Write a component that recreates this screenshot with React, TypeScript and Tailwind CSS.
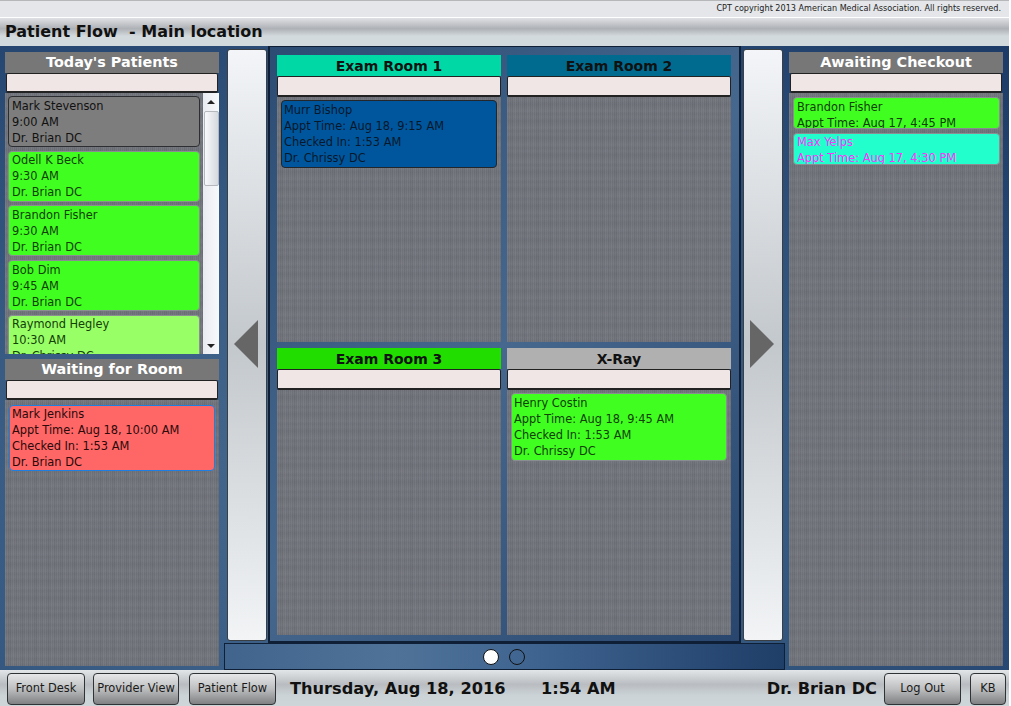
import React from 'react';

const linen =
  'bg-[#6f727a] bg-[repeating-linear-gradient(90deg,rgba(255,255,255,0.025)_0px,rgba(255,255,255,0)_3px,rgba(0,0,0,0.025)_5px,rgba(255,255,255,0.03)_8px,rgba(0,0,0,0.015)_11px,rgba(255,255,255,0.025)_13px),repeating-linear-gradient(0deg,rgba(0,0,0,0.025)_0px,rgba(255,255,255,0.025)_4px,rgba(0,0,0,0.01)_7px,rgba(255,255,255,0.03)_10px,rgba(0,0,0,0.025)_17px),repeating-linear-gradient(90deg,rgba(255,255,255,0.03)_0px,rgba(255,255,255,0.03)_1px,rgba(0,0,0,0.03)_1px,rgba(0,0,0,0.03)_2px)]';

const SearchBox = ({ className = 'h-[20px] mx-px' }: { className?: string }) => (
  <div className={`rounded-[2px] border border-[#222] border-b-2 bg-[#f1e6e6] ${className}`} />
);

const ColumnHeader = ({ title }: { title: string }) => (
  <div className="h-[21px] bg-[#777777] text-center text-[14.4px] leading-[21px] font-bold text-white">
    {title}
  </div>
);

const RoomHeader = ({ title, color }: { title: string; color: string }) => (
  <div className={`h-[21px] text-center text-[14px] leading-[22px] font-bold text-[#111] ${color}`}>
    {title}
  </div>
);

interface CardProps {
  lines: string[];
  className: string;
}

const Card = ({ lines, className }: CardProps) => (
  <div className={`shrink-0 overflow-hidden rounded-[4px] border text-[11.4px] leading-[16px] whitespace-nowrap ${className}`}>
    {lines.map((line) => (
      <div key={line}>{line}</div>
    ))}
  </div>
);

const ArrowButton = ({ dir }: { dir: 'left' | 'right' }) => (
  <div className="w-[40px] h-[592px] mt-[3px] flex items-center justify-center rounded-[3px] border border-[#3a3f44] bg-gradient-to-b from-[#f3f5f8] via-[#c3c8cc] to-[#f2f4f6]">
    <svg width="26" height="48" viewBox="0 0 26 48" className="mt-[-2px]">
      <polygon points={dir === 'left' ? '24,0 24,48 0,24' : '0,0 0,48 24,24'} fill="#666666" />
    </svg>
  </div>
);

const Room = ({ title, color, children }: { title: string; color: string; children?: React.ReactNode }) => (
  <div className="flex flex-col h-[287px] w-[224px]">
    <RoomHeader title={title} color={color} />
    <SearchBox className="h-[21px]" />
    <div className={`flex-1 flex flex-col px-[4px] pt-[3px] ${linen}`}>{children}</div>
  </div>
);

const listCard = 'px-[3px] py-[0.5px] border-[#8a8d92]';
const greenCard = `bg-[#40ff20] text-[#14400a] ${listCard}`;

const BarButton = ({ label, width }: { label: string; width: string }) => (
  <div className={`h-[32px] flex items-center justify-center rounded-[4px] border border-[#2f3336] bg-gradient-to-b from-[#e6e7e8] via-[#bdbebf] to-[#7f8183] text-[11.4px] text-[#1a1a1a] ${width}`}>
    {label}
  </div>
);

export default function App() {
  return (
    <div className="w-[1009px] h-[706px] flex flex-col overflow-hidden font-['DejaVu_Sans',sans-serif]">
      {/* top strips */}
      <div className="h-[18px] shrink-0 border-t border-b border-t-[#b5b7b9] border-b-white bg-[#e4e6e9] text-right pr-[8px] text-[8.1px] leading-[15px] text-[#222]">
        CPT copyright 2013 American Medical Association. All rights reserved.
      </div>
      <div className="h-[28px] shrink-0 pl-[5px] bg-[linear-gradient(180deg,#dfe1e4_0%,#aeb1b6_38%,#d3dade_65%,#d3dade_100%)] text-[16px] leading-[27px] font-bold text-[#111] whitespace-pre">
        Patient Flow  - Main location
      </div>

      {/* main area */}
      <div className="h-[624px] shrink-0 flex pl-[5px] bg-[radial-gradient(ellipse_at_35%_70%,#46698f_0%,#365a82_45%,#1c3b66_100%)]">
        {/* left column */}
        <div className="w-[214px] mr-[5px] flex flex-col pt-[6px] pb-[4px]">
          <ColumnHeader title="Today's Patients" />
          <SearchBox />
          <div className={`h-[261px] shrink-0 flex ${linen}`}>
            <div className="flex-1 min-w-0 h-full overflow-hidden flex flex-col gap-[3.7px] pt-[3px] pl-[3px] pr-[3px]">
              <Card lines={['Mark Stevenson', '9:00 AM', 'Dr. Brian DC']} className="bg-[#7d7d7d] border-[#2c2e32] text-[#111] px-[3px] py-[0.5px]" />
              <Card lines={['Odell K Beck', '9:30 AM', 'Dr. Brian DC']} className={greenCard} />
              <Card lines={['Brandon Fisher', '9:30 AM', 'Dr. Brian DC']} className={greenCard} />
              <Card lines={['Bob Dim', '9:45 AM', 'Dr. Brian DC']} className={greenCard} />
              <Card lines={['Raymond Hegley', '10:30 AM', 'Dr. Chrissy DC']} className={`bg-[#99ff66] text-[#14400a] ${listCard}`} />
            </div>
            <div className="w-[16px] shrink-0 flex flex-col items-center bg-gradient-to-r from-[#e8ebf1] to-[#f8f9fb]">
              <div className="h-[18px] flex items-center">
                <div className="w-0 h-0 border-x-[4px] border-x-transparent border-b-[4px] border-b-[#222]" />
              </div>
              <div className="w-[15px] h-[75px] rounded-[2px] border border-[#b4b8bd] bg-gradient-to-r from-[#f8f9fb] to-[#d5d9de]" />
              <div className="flex-1" />
              <div className="h-[16px] flex items-center">
                <div className="w-0 h-0 border-x-[4px] border-x-transparent border-t-[4px] border-t-[#222]" />
              </div>
            </div>
          </div>
          <div className="mt-[5px]">
            <ColumnHeader title="Waiting for Room" />
          </div>
          <SearchBox />
          <div className={`flex-1 flex flex-col px-[4px] pt-[5px] ${linen}`}>
            <Card
              lines={['Mark Jenkins', 'Appt Time: Aug 18, 10:00 AM', 'Checked In: 1:53 AM', 'Dr. Brian DC']}
              className="bg-[#ff6666] border-[#1f7fe0] text-[#2a0a0a] px-[2px]"
            />
          </div>
        </div>

        {/* center block */}
        <div className="w-[561px] flex flex-col">
          <div className="h-[597px] flex">
            <div className="ml-[3px]">
              <ArrowButton dir="left" />
            </div>
            <div className="w-[473px] h-[597px] ml-px border-x-2 border-t border-b-2 border-[#0f1f35] bg-[linear-gradient(135deg,#2c4c74_0%,#46678e_50%,#28466e_100%)] px-[7px] pt-[8px]">
              <div className="grid grid-cols-[224px_224px] gap-x-[6px] gap-y-[6px]">
                <Room title="Exam Room 1" color="bg-[#00d9a6]">
                  <Card
                    lines={['Murr Bishop', 'Appt Time: Aug 18, 9:15 AM', 'Checked In: 1:53 AM', 'Dr. Chrissy DC']}
                    className="bg-[#00569c] border-[#23262b] text-[#07182c] px-[2px] py-px"
                  />
                </Room>
                <Room title="Exam Room 2" color="bg-[#006b8f]" />
                <Room title="Exam Room 3" color="bg-[#22dd00]" />
                <Room title="X-Ray" color="bg-[#b0b0b0]">
                  <Card
                    lines={['Henry Costin', 'Appt Time: Aug 18, 9:45 AM', 'Checked In: 1:53 AM', 'Dr. Chrissy DC']}
                    className="bg-[#40ff20] text-[#14400a] border-[#8a8d92] px-[2px] py-px"
                  />
                </Room>
              </div>
            </div>
            <div className="ml-[2px]">
              <ArrowButton dir="right" />
            </div>
          </div>
          <div className="h-[27px] flex items-center justify-center gap-[10px] border border-[#0f1f35] bg-[linear-gradient(90deg,#40648c_0%,#4f7398_30%,#3f6490_55%,#1f3e68_100%)]">
            <div className="ml-[-2px] w-[16px] h-[16px] rounded-full border border-[#111] bg-white" />
            <div className="w-[16px] h-[16px] rounded-full border border-[#111]" />
          </div>
        </div>

        {/* right column */}
        <div className="w-[214px] ml-[4px] flex flex-col pt-[6px] pb-[4px]">
          <ColumnHeader title="Awaiting Checkout" />
          <SearchBox />
          <div className={`flex-1 flex flex-col gap-[4px] pl-[4px] pr-[3px] pt-[4px] ${linen}`}>
            <Card lines={['Brandon Fisher', 'Appt Time: Aug 17, 4:45 PM']} className="h-[32px] px-[3px] pt-[0.5px] bg-[#40ff20] border-[#8a8d92] text-[#14400a]" />
            <Card lines={['Max Yelps', 'Appt Time: Aug 17, 4:30 PM']} className="h-[32px] px-[3px] bg-[#22ffcc] border-[#8a8d92] text-[#ff33ff]" />
          </div>
        </div>
      </div>

      {/* bottom bar */}
      <div className="h-[36px] shrink-0 flex items-center pl-[7px] pr-[3px] pt-[2px] bg-[linear-gradient(180deg,#e3e6e8_0%,#b9bcc0_40%,#cbd3d6_70%,#cfd6d9_100%)]">
        <BarButton label="Front Desk" width="w-[78px]" />
        <div className="w-[8px]" />
        <BarButton label="Provider View" width="w-[86px]" />
        <div className="w-[10px]" />
        <BarButton label="Patient Flow" width="w-[87px]" />
        <div className="w-[14px] shrink-0" />
        <div className="w-[251px] shrink-0 text-[16.2px] font-bold text-[#111] whitespace-nowrap">Thursday, Aug 18, 2016</div>
        <div className="text-[16.2px] font-bold text-[#111] whitespace-nowrap">1:54 AM</div>
        <div className="flex-1" />
        <div className="text-[16.2px] font-bold text-[#111] whitespace-nowrap mr-[7px]">Dr. Brian DC</div>
        <BarButton label="Log Out" width="w-[77px]" />
        <div className="w-[9px]" />
        <BarButton label="KB" width="w-[36px]" />
      </div>
    </div>
  );
}
